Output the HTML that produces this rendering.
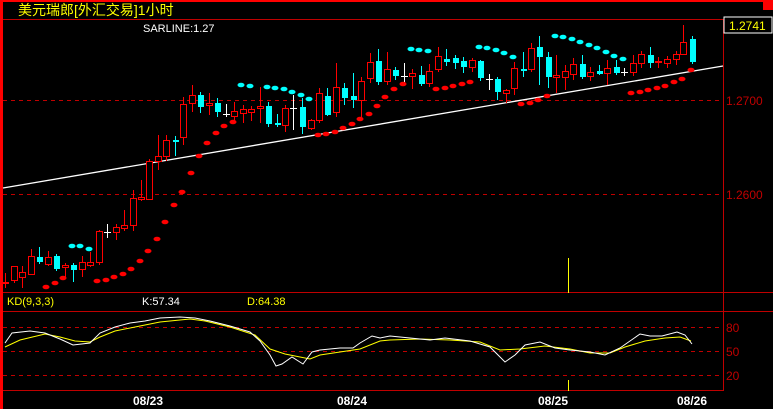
<!DOCTYPE html>
<html><head><meta charset="utf-8"><style>
html,body{margin:0;padding:0;background:#000;width:773px;height:409px;overflow:hidden}
svg{display:block}
text{font-family:"Liberation Sans","Noto Sans CJK SC",sans-serif}
</style></head><body>
<svg width="773" height="409" viewBox="0 0 773 409" xmlns="http://www.w3.org/2000/svg">
<rect width="773" height="409" fill="#000"/>
<!-- frame -->
<rect x="0" y="0" width="773" height="2" fill="#f00"/>
<rect x="0" y="0" width="3" height="409" fill="#f00"/>
<rect x="763" y="2" width="10" height="8" fill="#f00"/>
<line x1="3" y1="19.5" x2="723" y2="19.5" stroke="#c00000"/>
<line x1="723.5" y1="19" x2="723.5" y2="391" stroke="#c00000"/>
<line x1="3" y1="292.5" x2="773" y2="292.5" stroke="#c00000"/>
<line x1="3" y1="311.5" x2="773" y2="311.5" stroke="#c00000"/>
<line x1="3" y1="390.5" x2="723" y2="390.5" stroke="#c00000"/>
<g stroke="#c00000" stroke-dasharray="4 4">
<line x1="3" y1="100.5" x2="723" y2="100.5"/>
<line x1="3" y1="194.5" x2="723" y2="194.5"/>
<line x1="3" y1="327.5" x2="723" y2="327.5"/>
<line x1="3" y1="351.5" x2="723" y2="351.5"/>
<line x1="3" y1="375.5" x2="723" y2="375.5"/>
</g>
<text x="18" y="15" fill="#ffff00" font-size="14">美元瑞郎[外汇交易]1小时</text>
<text x="143" y="32" fill="#fff" font-size="11">SARLINE:1.27</text>
<rect x="724" y="17" width="48" height="16" fill="#000" stroke="#fff"/>
<text x="729" y="30" fill="#ffff00" font-size="12">1.2741</text>
<text x="726" y="105" fill="#c00000" font-size="12">1.2700</text>
<text x="726" y="199" fill="#c00000" font-size="12">1.2600</text>
<text x="726" y="332" fill="#c00000" font-size="12">80</text>
<text x="726" y="356" fill="#c00000" font-size="12">50</text>
<text x="726" y="380" fill="#c00000" font-size="12">20</text>
<text x="7" y="305" fill="#ffff00" font-size="11">KD(9,3,3)</text>
<text x="142" y="305" fill="#fff" font-size="11">K:57.34</text>
<text x="247" y="305" fill="#ffff00" font-size="11">D:64.38</text>
<g fill="#fff" font-size="12" font-weight="bold" font-family="Liberation Mono,monospace">
<text x="133" y="405" font-family="Liberation Mono,monospace">08/23</text>
<text x="337" y="405" font-family="Liberation Mono,monospace">08/24</text>
<text x="538" y="405" font-family="Liberation Mono,monospace">08/25</text>
<text x="677" y="405" font-family="Liberation Mono,monospace">08/26</text>
</g>
<!-- volume-ish lines -->
<line x1="568.5" y1="258" x2="568.5" y2="293" stroke="#ffff00"/>
<line x1="568.5" y1="380" x2="568.5" y2="391" stroke="#ffff00"/>
<!-- trendline -->
<line x1="3" y1="188" x2="723" y2="66" stroke="#fff" stroke-width="1.3"/>
<!-- wicks -->
<path stroke="#f00" fill="none" d="M5.5 273V288M14.5 266V283M22.5 266V288M31.5 249V275M48.5 251V266M65.5 263V278M82.5 256V277M90.5 252V267M99.5 230V265M116.5 224V240M124.5 210V231M133.5 190V231M141.5 180V201M149.5 159V200M158.5 135V170M166.5 135V161M183.5 97V145M192.5 85V112M209.5 93V115M234.5 102V121M243.5 105V123M251.5 106V121M260.5 87V123M285.5 105V132M311.5 119V130M319.5 88V123M336.5 63V117M361.5 77V120M370.5 53V83M387.5 52V85M412.5 69V89M429.5 64V87M438.5 47V72M472.5 58V72M506.5 89V103M514.5 62V95M531.5 43V72M556.5 55V93M565.5 65V90M573.5 58V80M590.5 67V81M607.5 60V85M633.5 55V76M641.5 51V68M658.5 57V68M667.5 56V68M676.5 51V65M683.5 25V55"/>
<path stroke="#0ff" fill="none" d="M39.5 247V264M56.5 254V271M73.5 263V282M175.5 136V156M200.5 92V113M217.5 98V117M268.5 102V127M277.5 114V127M302.5 98V134M327.5 88V116M344.5 83V105M353.5 73V108M378.5 49V85M395.5 67V80M421.5 66V86M446.5 49V66M455.5 55V69M463.5 57V73M480.5 60V81M497.5 77V100M523.5 52V77M539.5 36V85M548.5 52V88M582.5 55V79M599.5 65V75M616.5 60V75M650.5 47V68M692.5 36V64"/>
<path stroke="#fff" fill="none" d="M107.5 224V238M104 232.5H111M226.5 104V117M223 114.5H230M293.5 95V130M290 108.5H297M404.5 63V85M401 76.5H408M489.5 74V90M486 79.5H493M624.5 68V76M621 72.5H628"/>
<!-- red bodies -->
<g fill="#000" stroke="#f00">
<rect x="2.5" y="282.5" width="6" height="1"/><rect x="11.5" y="266.5" width="6" height="14"/><rect x="19.5" y="272.5" width="6" height="5"/><rect x="28.5" y="256.5" width="6" height="18"/><rect x="45.5" y="257.5" width="6" height="7"/><rect x="62.5" y="265.5" width="6" height="2"/><rect x="79.5" y="262.5" width="6" height="7"/><rect x="87.5" y="262.5" width="6" height="3"/><rect x="96.5" y="231.5" width="6" height="31"/><rect x="113.5" y="227.5" width="6" height="5"/><rect x="121.5" y="225.5" width="6" height="3"/><rect x="130.5" y="198.5" width="6" height="27"/><rect x="138.5" y="197.5" width="6" height="2"/><rect x="146.5" y="161.5" width="6" height="38"/><rect x="155.5" y="156.5" width="6" height="5"/><rect x="163.5" y="140.5" width="6" height="16"/><rect x="180.5" y="104.5" width="6" height="33"/><rect x="189.5" y="95.5" width="6" height="8"/><rect x="206.5" y="103.5" width="6" height="2"/><rect x="231.5" y="111.5" width="6" height="5"/><rect x="240.5" y="109.5" width="6" height="4"/><rect x="248.5" y="109.5" width="6" height="3"/><rect x="257.5" y="106.5" width="6" height="2"/><rect x="282.5" y="108.5" width="6" height="17"/><rect x="308.5" y="120.5" width="6" height="8"/><rect x="316.5" y="93.5" width="6" height="27"/><rect x="333.5" y="87.5" width="6" height="25"/><rect x="358.5" y="81.5" width="6" height="19"/><rect x="367.5" y="62.5" width="6" height="16"/><rect x="384.5" y="69.5" width="6" height="12"/><rect x="409.5" y="73.5" width="6" height="3"/><rect x="426.5" y="71.5" width="6" height="12"/><rect x="435.5" y="56.5" width="6" height="13"/><rect x="469.5" y="60.5" width="6" height="7"/><rect x="503.5" y="90.5" width="6" height="3"/><rect x="511.5" y="68.5" width="6" height="20"/><rect x="528.5" y="48.5" width="6" height="21"/><rect x="553.5" y="75.5" width="6" height="2"/><rect x="562.5" y="71.5" width="6" height="6"/><rect x="570.5" y="64.5" width="6" height="10"/><rect x="587.5" y="72.5" width="6" height="4"/><rect x="604.5" y="68.5" width="6" height="5"/><rect x="630.5" y="63.5" width="6" height="9"/><rect x="638.5" y="54.5" width="6" height="9"/><rect x="655.5" y="61.5" width="6" height="1"/><rect x="664.5" y="59.5" width="6" height="4"/><rect x="673.5" y="54.5" width="6" height="5"/><rect x="680.5" y="42.5" width="6" height="12"/>
</g>
<!-- cyan bodies -->
<g fill="#0ff">
<rect x="37" y="257" width="6" height="5"/><rect x="54" y="256" width="6" height="13"/><rect x="71" y="265" width="6" height="5"/><rect x="173" y="140" width="6" height="2"/><rect x="198" y="95" width="6" height="12"/><rect x="215" y="103" width="6" height="9"/><rect x="266" y="106" width="6" height="18"/><rect x="275" y="123" width="6" height="2"/><rect x="300" y="107" width="6" height="20"/><rect x="325" y="96" width="6" height="19"/><rect x="342" y="88" width="6" height="10"/><rect x="351" y="96" width="6" height="4"/><rect x="376" y="61" width="6" height="21"/><rect x="393" y="70" width="6" height="6"/><rect x="419" y="75" width="6" height="9"/><rect x="444" y="59" width="6" height="3"/><rect x="453" y="58" width="6" height="5"/><rect x="461" y="61" width="6" height="6"/><rect x="478" y="61" width="6" height="17"/><rect x="495" y="79" width="6" height="13"/><rect x="521" y="69" width="6" height="2"/><rect x="537" y="47" width="6" height="10"/><rect x="546" y="57" width="6" height="20"/><rect x="580" y="64" width="6" height="13"/><rect x="597" y="71" width="6" height="3"/><rect x="614" y="67" width="6" height="6"/><rect x="648" y="55" width="6" height="8"/><rect x="690" y="39" width="6" height="23"/>
</g>
<!-- SAR red -->
<g fill="#f00">
<ellipse cx="46" cy="287" rx="3.5" ry="2.3"/><ellipse cx="55" cy="283" rx="3.5" ry="2.3"/><ellipse cx="63" cy="278" rx="3.5" ry="2.3"/><ellipse cx="97" cy="281" rx="3.5" ry="2.3"/><ellipse cx="106" cy="280" rx="3.5" ry="2.3"/><ellipse cx="114" cy="277" rx="3.5" ry="2.3"/><ellipse cx="123" cy="274" rx="3.5" ry="2.3"/><ellipse cx="131" cy="269" rx="3.5" ry="2.3"/><ellipse cx="140" cy="261" rx="3.5" ry="2.3"/><ellipse cx="148" cy="251" rx="3.5" ry="2.3"/><ellipse cx="157" cy="239" rx="3.5" ry="2.3"/><ellipse cx="165" cy="222" rx="3.5" ry="2.3"/><ellipse cx="174" cy="205" rx="3.5" ry="2.3"/><ellipse cx="182" cy="192" rx="3.5" ry="2.3"/><ellipse cx="191" cy="173" rx="3.5" ry="2.3"/><ellipse cx="199" cy="156" rx="3.5" ry="2.3"/><ellipse cx="207" cy="143" rx="3.5" ry="2.3"/><ellipse cx="216" cy="133" rx="3.5" ry="2.3"/><ellipse cx="224" cy="126" rx="3.5" ry="2.3"/><ellipse cx="233" cy="122" rx="3.5" ry="2.3"/>
<ellipse cx="318" cy="135" rx="3.5" ry="2.3"/><ellipse cx="326" cy="134" rx="3.5" ry="2.3"/><ellipse cx="335" cy="132" rx="3.5" ry="2.3"/><ellipse cx="343" cy="128" rx="3.5" ry="2.3"/><ellipse cx="352" cy="124" rx="3.5" ry="2.3"/><ellipse cx="360" cy="119" rx="3.5" ry="2.3"/><ellipse cx="369" cy="114" rx="3.5" ry="2.3"/><ellipse cx="377" cy="106" rx="3.5" ry="2.3"/><ellipse cx="385" cy="97" rx="3.5" ry="2.3"/><ellipse cx="394" cy="89" rx="3.5" ry="2.3"/><ellipse cx="403" cy="84" rx="3.5" ry="2.3"/>
<ellipse cx="436" cy="89" rx="3.5" ry="2.3"/><ellipse cx="445" cy="88" rx="3.5" ry="2.3"/><ellipse cx="453" cy="86" rx="3.5" ry="2.3"/><ellipse cx="462" cy="84" rx="3.5" ry="2.3"/><ellipse cx="470" cy="82" rx="3.5" ry="2.3"/>
<ellipse cx="521" cy="104" rx="3.5" ry="2.3"/><ellipse cx="530" cy="103" rx="3.5" ry="2.3"/><ellipse cx="538" cy="100" rx="3.5" ry="2.3"/><ellipse cx="547" cy="96" rx="3.5" ry="2.3"/>
<ellipse cx="631" cy="93" rx="3.5" ry="2.3"/><ellipse cx="640" cy="92" rx="3.5" ry="2.3"/><ellipse cx="648" cy="90" rx="3.5" ry="2.3"/><ellipse cx="657" cy="88" rx="3.5" ry="2.3"/><ellipse cx="665" cy="86" rx="3.5" ry="2.3"/><ellipse cx="674" cy="82" rx="3.5" ry="2.3"/><ellipse cx="682" cy="79" rx="3.5" ry="2.3"/><ellipse cx="691" cy="70" rx="3.5" ry="2.3"/>
</g>
<!-- SAR cyan -->
<g fill="#0ff">
<ellipse cx="72" cy="246" rx="3.5" ry="2.3"/><ellipse cx="80" cy="246" rx="3.5" ry="2.3"/><ellipse cx="89" cy="249" rx="3.5" ry="2.3"/>
<ellipse cx="241" cy="85" rx="3.5" ry="2.3"/><ellipse cx="250" cy="86" rx="3.5" ry="2.3"/><ellipse cx="267" cy="87" rx="3.5" ry="2.3"/><ellipse cx="275" cy="88" rx="3.5" ry="2.3"/><ellipse cx="284" cy="89" rx="3.5" ry="2.3"/><ellipse cx="292" cy="92" rx="3.5" ry="2.3"/><ellipse cx="301" cy="95" rx="3.5" ry="2.3"/><ellipse cx="309" cy="99" rx="3.5" ry="2.3"/>
<ellipse cx="411" cy="49" rx="3.5" ry="2.3"/><ellipse cx="419" cy="50" rx="3.5" ry="2.3"/><ellipse cx="428" cy="51" rx="3.5" ry="2.3"/>
<ellipse cx="479" cy="47" rx="3.5" ry="2.3"/><ellipse cx="487" cy="48" rx="3.5" ry="2.3"/><ellipse cx="496" cy="50" rx="3.5" ry="2.3"/><ellipse cx="504" cy="53" rx="3.5" ry="2.3"/><ellipse cx="513" cy="57" rx="3.5" ry="2.3"/>
<ellipse cx="555" cy="36" rx="3.5" ry="2.3"/><ellipse cx="563" cy="37" rx="3.5" ry="2.3"/><ellipse cx="572" cy="39" rx="3.5" ry="2.3"/><ellipse cx="580" cy="42" rx="3.5" ry="2.3"/><ellipse cx="589" cy="45" rx="3.5" ry="2.3"/><ellipse cx="597" cy="48" rx="3.5" ry="2.3"/><ellipse cx="606" cy="52" rx="3.5" ry="2.3"/><ellipse cx="614" cy="56" rx="3.5" ry="2.3"/><ellipse cx="623" cy="59" rx="3.5" ry="2.3"/>
</g>
<!-- KD -->
<polyline fill="none" stroke="#ffff00" points="5,347 20,340 45,334 60,337 75,341 90,342 100,337 115,331 140,326 160,322 190,319 205,321 230,327 255,335 270,349 285,354 310,359 320,355 340,352 360,349 380,341 390,340 420,339 450,340 480,342 500,350 520,349 545,346 570,349 590,353 610,353 625,347 645,341 665,338 680,337 691,341"/>
<polyline fill="none" stroke="#fff" points="5,343 12,333 30,331 45,333 60,339 73,345 90,343 100,333 115,327 130,323 145,321 160,318 180,317 195,318 210,321 230,326 250,332 260,341 270,355 276,366 282,364 292,357 303,364 312,352 320,350 340,348 353,348 360,343 372,336 380,338 390,336 410,338 430,340 445,338 470,341 490,347 505,362 515,355 525,345 540,342 555,348 570,350 590,352 605,355 620,348 640,334 650,336 662,336 677,332 685,335 692,344"/>
</svg>
</body></html>
